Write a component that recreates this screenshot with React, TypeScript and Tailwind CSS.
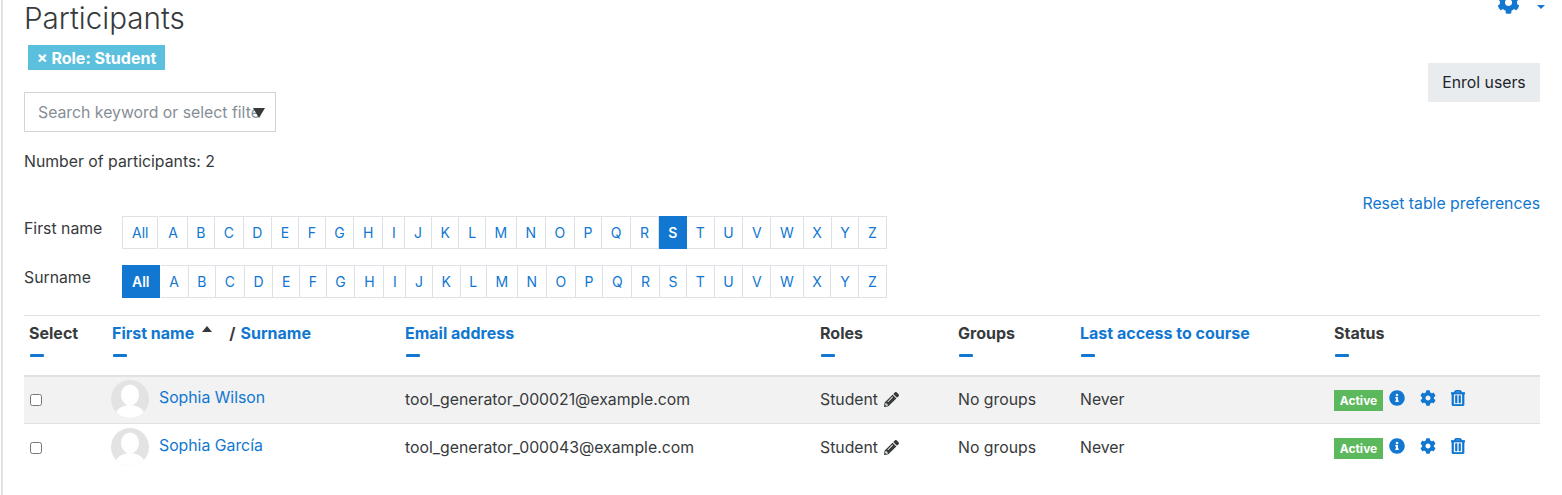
import { FaCog, FaInfoCircle, FaPencilAlt, FaRegTrashAlt } from 'react-icons/fa'

const LETTERS = 'ABCDEFGHIJKLMNOPQRSTUVWXYZ'.split('')

function Minus() {
  return <span className="mt-[12px] block h-[3px] w-[14px] rounded-[1px] bg-[#1177d1]" />
}

function Initials({ label, selected }: { label: string; selected: string }) {
  return (
    <div className="flex items-start">
      <span className="w-[98px] pt-[2px] leading-[22px]">{label}</span>
      <div className="flex">
        {['All', ...LETTERS].map((letter) => (
          <a
            key={letter}
            className={
              letter === selected
                ? 'flex h-[33px] items-center justify-center border border-[#1177d1] bg-[#1177d1] px-[8.7px] text-[14px] font-semibold text-white first:mr-px first:px-[9px]'
                : 'flex h-[33px] items-center justify-center border border-l-0 border-[#dee2e6] px-[8.7px] text-[14px] text-[#1177d1] first:mr-px first:border-l first:px-[9px]'
            }
          >
            {letter}
          </a>
        ))}
      </div>
    </div>
  )
}

function Avatar() {
  return (
    <svg viewBox="0 0 38 38" className="-mt-[2px] h-[38px] w-[38px] shrink-0">
      <defs>
        <clipPath id="avatar-clip">
          <circle cx="19" cy="19" r="19" />
        </clipPath>
      </defs>
      <circle cx="19" cy="19" r="19" fill="#e3e3e3" />
      <g clipPath="url(#avatar-clip)" fill="#ffffff">
        <ellipse cx="19" cy="15" rx="9" ry="10.5" />
        <ellipse cx="19" cy="34" rx="14" ry="9" />
      </g>
    </svg>
  )
}

function Row({ name, email, shaded }: { name: string; email: string; shaded?: boolean }) {
  return (
    <tr className={shaded ? 'h-[48px] border-b border-[#dee2e6] bg-[#f2f2f2]' : 'h-[48px]'}>
      <td className="pl-[6px] align-middle">
        <input type="checkbox" className="mt-[1px] block h-[12px] w-[12px]" />
      </td>
      <td className="pl-[4px] align-middle">
        <div className="flex items-center gap-[10px]">
          <Avatar />
          <a className="-mt-[3px] text-[#1177d1]">{name}</a>
        </div>
      </td>
      <td className="pl-[5px] align-middle">{email}</td>
      <td className="pl-[5px] align-middle">
        <span className="flex items-center gap-[6px]">
          Student <FaPencilAlt className="h-[15px] w-[15px] text-[#373a3c]" />
        </span>
      </td>
      <td className="pl-[5px] align-middle">No groups</td>
      <td className="pl-[5px] align-middle">Never</td>
      <td className="pl-[5px] align-middle">
        <div className="flex items-center">
          <span className="mt-[2px] flex h-[21px] w-[49px] items-center justify-center bg-[#5cb85c] text-[12px] font-bold text-white">
            Active
          </span>
          <FaInfoCircle className="-mt-[3px] ml-[6px] h-[16px] w-[16px] text-[#1177d1]" />
          <FaCog className="-mt-[3px] ml-[15px] h-[16px] w-[16px] text-[#1177d1]" />
          <FaRegTrashAlt
            stroke="currentColor"
            strokeWidth={24}
            className="-mt-[3px] ml-[15px] h-[16px] w-[14px] text-[#1177d1]"
          />
        </div>
      </td>
    </tr>
  )
}

export default function App() {
  return (
    <div className="ml-px h-[495px] overflow-hidden border-l-2 border-[#dee2e6] pl-[21px] pr-[22px] font-['Inter',sans-serif] text-[15.8px] text-[#373a3c]">
      <div className="flex justify-between">
        <div>
          <h1 className="h-[45px] text-[29.6px] font-light leading-[36px]">Participants</h1>
          <span className="ml-[4px] flex h-[25px] w-[137px] items-center justify-center bg-[#5bc0de] pt-px text-[16px] font-bold text-white">
            × Role: Student
          </span>
          <div className="relative mt-[22px] w-[252px]">
            <input
              placeholder="Search keyword or select filter"
              className="h-[40px] w-full border border-[#ced4da] pl-[13px] pr-[14px] text-[15.8px] placeholder:text-[#868e96]"
            />
            <svg viewBox="0 0 12 10" className="absolute left-[229px] top-[16px] h-[10px] w-[12px]">
              <path d="M0 0h12L6 10z" fill="#373a3c" />
            </svg>
          </div>
          <p className="mt-[21px] leading-[18px]">Number of participants: 2</p>
        </div>
        <div className="flex flex-col items-end">
          <div className="-mr-[5px] -mt-[9px] flex items-start">
            <FaCog className="h-[23px] w-[23px] text-[#1177d1]" />
            <svg viewBox="0 0 8 4" className="ml-[17px] mt-[14px] h-[4px] w-[8px]">
              <path d="M0 0h8L4 4z" fill="#1177d1" />
            </svg>
          </div>
          <button className="mt-[49px] h-[39px] w-[112px] bg-[#e9ecef] pt-px text-[15.8px] text-[#212529]">Enrol users</button>
          <a className="mt-[93px] leading-[18px] text-[#1177d1]">Reset table preferences</a>
        </div>
      </div>

      <div className="mt-[3px] flex flex-col gap-[16px]">
        <Initials label="First name" selected="S" />
        <Initials label="Surname" selected="All" />
      </div>

      <table className="mt-[17px] w-[1516px] table-fixed border-collapse border-t border-[#dee2e6]">
        <colgroup>
          <col className="w-[83px]" />
          <col className="w-[293px]" />
          <col className="w-[415px]" />
          <col className="w-[138px]" />
          <col className="w-[122px]" />
          <col className="w-[254px]" />
          <col className="w-[211px]" />
        </colgroup>
        <thead>
          <tr className="h-[60px] border-b-2 border-[#dee2e6] text-left align-top text-[16px]">
            <th className="pl-[5px] pt-[8px] font-bold leading-[18px]">
              Select
              <span className="block pl-px"><Minus /></span>
            </th>
            <th className="pl-[5px] pt-[8px] font-bold leading-[18px]">
              <span className="flex items-start">
                <a className="text-[#1177d1]">First name</a>
                <svg viewBox="0 0 12 6" className="ml-[7px] mt-[2px] h-[6px] w-[12px]">
                  <path d="M1 6L6 0l5 6z" fill="#373a3c" />
                </svg>
                <span className="ml-[16px]">/</span>
                <a className="ml-[5px] text-[#1177d1]">Surname</a>
              </span>
              <span className="block pl-px"><Minus /></span>
            </th>
            <th className="pl-[5px] pt-[8px] font-bold leading-[18px] text-[#1177d1]">
              Email address
              <span className="block pl-px"><Minus /></span>
            </th>
            <th className="pl-[5px] pt-[8px] font-bold leading-[18px]">
              Roles
              <span className="block pl-px"><Minus /></span>
            </th>
            <th className="pl-[5px] pt-[8px] font-bold leading-[18px]">
              Groups
              <span className="block pl-px"><Minus /></span>
            </th>
            <th className="pl-[5px] pt-[8px] font-bold leading-[18px] text-[#1177d1]">
              Last access to course
              <span className="block pl-px"><Minus /></span>
            </th>
            <th className="pl-[5px] pt-[8px] font-bold leading-[18px]">
              Status
              <span className="block pl-px"><Minus /></span>
            </th>
          </tr>
        </thead>
        <tbody>
          <Row name="Sophia Wilson" email="tool_generator_000021@example.com" shaded />
          <Row name="Sophia García" email="tool_generator_000043@example.com" />
        </tbody>
      </table>
    </div>
  )
}
